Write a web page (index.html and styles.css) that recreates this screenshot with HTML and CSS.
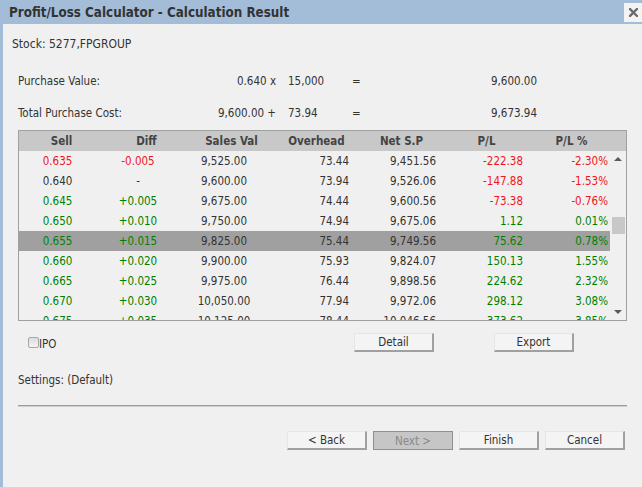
FILE: index.html
```html
<!DOCTYPE html>
<html>
<head>
<meta charset="utf-8">
<link rel="stylesheet" href="styles.css">
</head>
<body>
<div class="window">
  <div class="titlebar">
    <span class="title">Profit/Loss Calculator - Calculation Result</span>
    <button class="close" aria-label="Close"><svg width="9" height="9" viewBox="0 0 9 9"><path d="M1 1L8 8M8 1L1 8" stroke="#6a6a6a" stroke-width="2.4" stroke-linecap="square"/></svg></button>
  </div>
  <div class="content">
    <div class="stock">Stock: 5277,FPGROUP</div>
    <div class="summary">
      <span class="lbl">Purchase Value:</span><span class="a">0.640 x</span><span class="b">15,000</span><span class="eq">=</span><span class="res">9,600.00</span>
    </div>
    <div class="summary second">
      <span class="lbl">Total Purchase Cost:</span><span class="a">9,600.00 +</span><span class="b">73.94</span><span class="eq">=</span><span class="res">9,673.94</span>
    </div>
    <div class="grid">
      <div class="ghead">
        <span>Sell</span><span>Diff</span><span>Sales Val</span><span>Overhead</span><span>Net S.P</span><span>P/L</span><span>P/L %</span>
      </div>
      <div class="gbody">
        <div class="rows">
          <div class="row"><span class="c1 neg">0.635</span><span class="c2 neg">-0.005</span><span class="c3">9,525.00</span><span class="c4">73.44</span><span class="c5">9,451.56</span><span class="c6 neg">-222.38</span><span class="c7 neg">-2.30%</span></div>
          <div class="row"><span class="c1">0.640</span><span class="c2">-</span><span class="c3">9,600.00</span><span class="c4">73.94</span><span class="c5">9,526.06</span><span class="c6 neg">-147.88</span><span class="c7 neg">-1.53%</span></div>
          <div class="row"><span class="c1 pos">0.645</span><span class="c2 pos">+0.005</span><span class="c3">9,675.00</span><span class="c4">74.44</span><span class="c5">9,600.56</span><span class="c6 neg">-73.38</span><span class="c7 neg">-0.76%</span></div>
          <div class="row"><span class="c1 pos">0.650</span><span class="c2 pos">+0.010</span><span class="c3">9,750.00</span><span class="c4">74.94</span><span class="c5">9,675.06</span><span class="c6 pos">1.12</span><span class="c7 pos">0.01%</span></div>
          <div class="row sel"><span class="c1 pos">0.655</span><span class="c2 pos">+0.015</span><span class="c3">9,825.00</span><span class="c4">75.44</span><span class="c5">9,749.56</span><span class="c6 pos">75.62</span><span class="c7 pos">0.78%</span></div>
          <div class="row"><span class="c1 pos">0.660</span><span class="c2 pos">+0.020</span><span class="c3">9,900.00</span><span class="c4">75.93</span><span class="c5">9,824.07</span><span class="c6 pos">150.13</span><span class="c7 pos">1.55%</span></div>
          <div class="row"><span class="c1 pos">0.665</span><span class="c2 pos">+0.025</span><span class="c3">9,975.00</span><span class="c4">76.44</span><span class="c5">9,898.56</span><span class="c6 pos">224.62</span><span class="c7 pos">2.32%</span></div>
          <div class="row"><span class="c1 pos">0.670</span><span class="c2 pos">+0.030</span><span class="c3">10,050.00</span><span class="c4">77.94</span><span class="c5">9,972.06</span><span class="c6 pos">298.12</span><span class="c7 pos">3.08%</span></div>
          <div class="row"><span class="c1 pos">0.675</span><span class="c2 pos">+0.035</span><span class="c3">10,125.00</span><span class="c4">78.44</span><span class="c5">10,046.56</span><span class="c6 pos">373.62</span><span class="c7 pos">3.85%</span></div>
          <div class="row"><span class="c1 pos">0.680</span><span class="c2 pos">+0.040</span><span class="c3">10,200.00</span><span class="c4">78.94</span><span class="c5">10,121.06</span><span class="c6 pos">448.12</span><span class="c7 pos">4.62%</span></div>
        </div>
        <div class="vscroll">
          <span class="arrow up"></span>
          <span class="thumb"></span>
          <span class="arrow down"></span>
        </div>
      </div>
    </div>
    <div class="tools">
      <label class="ipo"><input type="checkbox" class="cb"><span>IPO</span></label>
      <div class="actions">
        <button class="btn">Detail</button>
        <button class="btn">Export</button>
      </div>
    </div>
    <div class="settings">Settings: (Default)</div>
    <div class="sep"></div>
    <div class="nav">
      <button class="btn">&lt; Back</button>
      <button class="btn disabled" disabled>Next &gt;</button>
      <button class="btn">Finish</button>
      <button class="btn">Cancel</button>
    </div>
  </div>
</div>
</body>
</html>
```

FILE: styles.css
```css
html, body {
  margin: 0;
  padding: 0;
}
body {
  font-family: "DejaVu Sans Condensed", "DejaVu Sans", sans-serif;
  font-size: 11.5px;
  color: #333;
  background: #a3bdd9;
}
.window {
  display: flex;
  flex-direction: column;
  min-height: 487px;
  background: #a3bdd9;
}
.titlebar {
  height: 24px;
  display: flex;
  align-items: center;
  justify-content: space-between;
  padding-left: 9px;
}
.title {
  font-weight: bold;
  font-size: 13.3px;
  color: #333;
}
.close {
  width: 18px;
  height: 19px;
  margin-top: 1px;
  padding: 0;
  border: none;
  background: #f3f3f3;
  display: flex;
  align-items: center;
  justify-content: center;
}
.content {
  flex: 1;
  margin-left: 3px;
  background: #f0f0f0;
  padding: 0 15px 0 15px;
  display: flex;
  flex-direction: column;
}
.stock {
  margin-top: 12px;
  margin-left: -6px;
  line-height: 16px;
  font-size: 12px;
}
.summary {
  display: grid;
  grid-template-columns: 180px 78px 76px 8px 177px;
  line-height: 16px;
  margin-top: 21px;
}
.summary.second {
  margin-top: 16px;
}
.summary .a {
  text-align: right;
}
.summary .b {
  padding-left: 12px;
}
.summary .res {
  text-align: right;
}
.grid {
  margin-top: 9px;
  border: 1px solid #a0a0a0;
  display: flex;
  flex-direction: column;
}
.ghead {
  height: 20px;
  background: #c8c8c8;
  display: grid;
  grid-template-columns: repeat(7, 85px);
  line-height: 20px;
  font-weight: bold;
  color: #444;
  overflow: hidden;
}
.ghead span {
  text-align: center;
}
.gbody {
  display: flex;
  height: 169px;
}
.rows {
  flex: 1;
  overflow: hidden;
}
.row {
  display: grid;
  grid-template-columns: repeat(7, 85px);
  height: 20px;
  line-height: 20px;
  white-space: nowrap;
}
.row.sel {
  background: #a0a0a0;
}
.row span {
  text-align: right;
}
.row .c1 { text-align: center; padding-right: 8px; }
.row .c2 { text-align: center; padding-right: 17px; }
.row .c3 { text-align: center; padding-right: 15px; }
.row .c4 { padding-right: 10px; }
.row .c5 { padding-right: 8px; }
.row .c6 { padding-right: 6px; }
.row .c7 { padding-right: 6px; }
.neg { color: #f0141e; }
.pos { color: #008000; }
.vscroll {
  width: 16px;
  display: flex;
  flex-direction: column;
  align-items: center;
}
.arrow {
  width: 0;
  height: 0;
  border-left: 4px solid transparent;
  border-right: 4px solid transparent;
}
.arrow.up {
  margin-top: 6px;
  border-bottom: 4px solid #5a5a5a;
}
.arrow.down {
  margin-top: auto;
  margin-bottom: 6px;
  border-top: 4px solid #5a5a5a;
}
.thumb {
  width: 13px;
  height: 17px;
  margin-top: 56px;
  margin-left: 1px;
  background: #c8c8c8;
}
.tools {
  margin-top: 12px;
  height: 19px;
  display: flex;
  align-items: flex-start;
}
.ipo {
  display: flex;
  align-items: flex-end;
  margin-left: 10px;
  margin-top: 4px;
}
.cb {
  appearance: none;
  -webkit-appearance: none;
  margin: 0;
  width: 11px;
  height: 11px;
  border: 1px solid #a6a6a6;
  border-radius: 2px;
  background: linear-gradient(#dcdcdc, #f4f4f4);
  box-sizing: border-box;
}
.ipo span {
  line-height: 12px;
  margin-bottom: -2px;
}
.actions {
  margin-left: auto;
  margin-right: 53px;
  display: flex;
  gap: 60px;
}
.btn {
  box-sizing: border-box;
  width: 80px;
  height: 19px;
  padding: 0;
  font-family: inherit;
  font-size: 11.5px;
  color: #333;
  background: #f4f4f4;
  border: 1px solid #e6e6e6;
  border-right: 2px solid #a0a0a0;
  border-bottom: 2px solid #a0a0a0;
  line-height: 16px;
}
.btn.disabled {
  background: #c6c6c6;
  border: 1px solid #8f8f8f;
  color: #8a8a8a;
}
.settings {
  margin-top: 20px;
  line-height: 16px;
}
.sep {
  margin-top: 17px;
  height: 1px;
  background: #9c9c9c;
  border-bottom: 1px solid #cfcfcf;
}
.nav {
  margin-top: 24px;
  display: flex;
  justify-content: flex-end;
  gap: 6px;
  padding-right: 2px;
}
```
